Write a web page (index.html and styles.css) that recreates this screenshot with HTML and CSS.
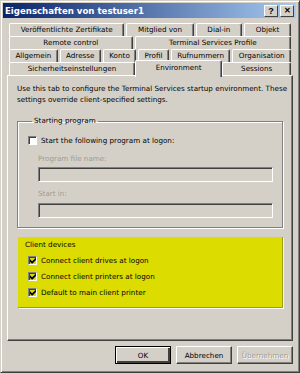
FILE: index.html
```html
<!DOCTYPE html>
<html lang="de">
    <head>
        <meta charset="UTF-8">
        <meta name="viewport" content="width=device-width, initial-scale=1.0">
        <title>Eigenschaften von testuser1</title>
        <link rel="stylesheet" href="styles.css">
    </head>
    <body>

        <div class="window">

            <!-- Title bar -->
            <div class="titlebar">
                <span class="title">Eigenschaften von testuser1</span>
                <div class="title-buttons">
                    <span class="tbtn">?</span>
                    <span class="tbtn tbtn-close">&#x2715;</span>
                </div>
            </div>

            <!-- Tabs -->
            <div class="tabs">
                <div class="tab-row">
                    <span class="tab">Veröffentlichte Zertifikate</span>
                    <span class="tab">Mitglied von</span>
                    <span class="tab">Dial-in</span>
                    <span class="tab">Objekt</span>
                </div>
                <div class="tab-row">
                    <span class="tab">Remote control</span>
                    <span class="tab">Terminal Services Profile</span>
                </div>
                <div class="tab-row">
                    <span class="tab">Allgemein</span>
                    <span class="tab">Adresse</span>
                    <span class="tab">Konto</span>
                    <span class="tab">Profil</span>
                    <span class="tab">Rufnummern</span>
                    <span class="tab">Organisation</span>
                </div>
                <div class="tab-row front">
                    <span class="tab">Sicherheitseinstellungen</span>
                    <span class="tab active">Environment</span>
                    <span class="tab">Sessions</span>
                </div>
            </div>

            <!-- Tab page -->
            <div class="panel">
                <p class="intro">Use this tab to configure the Terminal Services startup environment. These<br>settings override client-specified settings.</p>

                <fieldset class="group">
                    <legend>Starting program</legend>
                    <label class="check">
                        <span class="box"></span>
                        Start the following program at logon:
                    </label>
                    <div class="field">
                        <span class="field-label">Program file name:</span>
                        <span class="input"></span>
                    </div>
                    <div class="field">
                        <span class="field-label">Start in:</span>
                        <span class="input"></span>
                    </div>
                </fieldset>

                <div class="group highlight">
                    <span class="group-label">Client devices</span>
                    <label class="check">
                        <span class="box"><svg width="7" height="7" viewBox="0 0 7 7"><path d="M0 2v3l2 2h1l4-4V0L2.5 4.5z" fill="#000"/></svg></span>
                        Connect client drives at logon
                    </label>
                    <label class="check">
                        <span class="box"><svg width="7" height="7" viewBox="0 0 7 7"><path d="M0 2v3l2 2h1l4-4V0L2.5 4.5z" fill="#000"/></svg></span>
                        Connect client printers at logon
                    </label>
                    <label class="check">
                        <span class="box"><svg width="7" height="7" viewBox="0 0 7 7"><path d="M0 2v3l2 2h1l4-4V0L2.5 4.5z" fill="#000"/></svg></span>
                        Default to main client printer
                    </label>
                </div>
            </div>

            <!-- Dialog buttons -->
            <div class="buttons">
                <button class="btn default">OK</button>
                <button class="btn">Abbrechen</button>
                <button class="btn" disabled>Übernehmen</button>
            </div>

        </div>

    </body>
</html>
```

FILE: styles.css
```css
/* Win2000 property sheet */
body {
    margin: 0;
    background-color: #d4d0c8;
    font-family: "DejaVu Sans", Verdana, sans-serif;
    font-size: 7.2px;
    color: #000;
}
.window {
    width: 300px;
    height: 373px;
    box-sizing: border-box;
    padding: 2px 3px 3px 2px;
    border-top: 1px solid #d4d0c8;
    border-left: 1px solid #d4d0c8;
    border-right: 1px solid #404040;
    border-bottom: 1px solid #404040;
    box-shadow: inset 1px 1px #fff, inset -1px -1px #808080;
    display: flex;
    flex-direction: column;
}
.titlebar {
    height: 15px;
    display: flex;
    align-items: center;
    justify-content: space-between;
    padding: 0 2px 0 2px;
    background: linear-gradient(to right, #0a246a, #a6caf0);
}
.title {
    color: white;
    font-weight: bold;
    font-size: 8.6px;
}
.title-buttons {
    display: flex;
    gap: 2px;
}
.tbtn {
    width: 12px;
    height: 10px;
    background-color: #d4d0c8;
    border-top: 1px solid #fff;
    border-left: 1px solid #fff;
    border-right: 1px solid #404040;
    border-bottom: 1px solid #404040;
    font-family: "Liberation Sans", Arial, sans-serif;
    font-size: 9px;
    font-weight: bold;
    line-height: 10px;
    text-align: center;
}
.tbtn-close {
    font-size: 8px;
}

/* Tabs */
.tabs {
    margin: 5px 5px 0 6px;
}
.tab-row {
    display: flex;
    height: 13px;
}
.tab {
    flex: 1 1 auto;
    box-sizing: border-box;
    height: 13px;
    margin-right: 2px;
    text-align: center;
    line-height: 12px;
    white-space: nowrap;
    border-top: 1px solid #fff;
    border-left: 1px solid #fff;
    border-right: 1px solid #404040;
    border-radius: 2px 2px 0 0;
    box-shadow: inset -1px 0 #808080;
}
.tab:last-child {
    margin-right: 0;
}
.tab-row.front {
    position: relative;
    z-index: 1;
}
.tab.active {
    height: 17px;
    margin: -2px 0 0 -2px;
    padding: 0 2px;
    line-height: 13px;
    background-color: #d4d0c8;
}

/* Tab page */
.panel {
    flex: 1;
    margin: 0 3px 0 4px;
    padding: 8px 9px 0 9px;
    border-top: 1px solid #fff;
    border-left: 1px solid #fff;
    border-right: 1px solid #404040;
    border-bottom: 1px solid #404040;
    box-shadow: inset -1px -1px #808080;
}
.intro {
    margin: 0 0 11px 0;
    line-height: 10.5px;
    white-space: nowrap;
}
.group {
    margin: 0 0 9px 0;
    padding: 6px 9px 9px 10px;
    border: 1px solid #808080;
    box-shadow: 1px 1px #fff, inset 1px 1px #fff;
}
.group legend {
    padding: 0 2px;
    margin-left: 4px;
    line-height: 10px;
}
.check {
    display: flex;
    align-items: center;
    gap: 4px;
    height: 16px;
}
.box {
    width: 9px;
    height: 9px;
    box-sizing: border-box;
    display: flex;
    align-items: center;
    justify-content: center;
    background-color: white;
    border-top: 1px solid #808080;
    border-left: 1px solid #808080;
    border-right: 1px solid #fff;
    border-bottom: 1px solid #fff;
    box-shadow: inset 1px 1px #404040;
}
.box svg {
    margin: 1px 0 0 1px;
}
.field {
    display: flex;
    flex-direction: column;
    margin-left: 10px;
}
.field-label {
    color: #a09c94;
    line-height: 10px;
    margin: 6px 0 3px 0;
}
.field + .field .field-label {
    margin-top: 7px;
    margin-bottom: 4px;
}
.input {
    height: 15px;
    box-sizing: border-box;
    border-top: 1px solid #808080;
    border-left: 1px solid #808080;
    border-right: 1px solid #fff;
    border-bottom: 1px solid #fff;
    box-shadow: inset 1px 1px #404040;
}
.highlight {
    background-color: #dcdc00;
    padding: 3px 9px 8px 10px;
    margin-left: 1px;
    border: none;
    box-shadow: 1px 1px #fff, inset -1px -1px #a0a000;
}
.group-label {
    display: block;
    line-height: 10px;
    margin: 0 0 2px -3px;
}
.highlight .box {
    background-color: #dcdc00;
}

/* Dialog buttons */
.buttons {
    display: flex;
    justify-content: flex-end;
    gap: 5px;
    padding: 5px 3px 5px 0;
}
.btn {
    width: 56px;
    height: 18px;
    padding: 0;
    font-family: inherit;
    font-size: 7.2px;
    color: #000;
    background-color: #d4d0c8;
    border-top: 1px solid #fff;
    border-left: 1px solid #fff;
    border-right: 1px solid #404040;
    border-bottom: 1px solid #404040;
    box-shadow: inset -1px -1px #808080;
}
.btn.default {
    border: 1px solid #000;
    box-shadow: inset 1px 1px #fff, inset -2px -2px #404040;
}
.btn:disabled {
    color: #a09c94;
    text-shadow: 1px 1px #fff;
}
```
